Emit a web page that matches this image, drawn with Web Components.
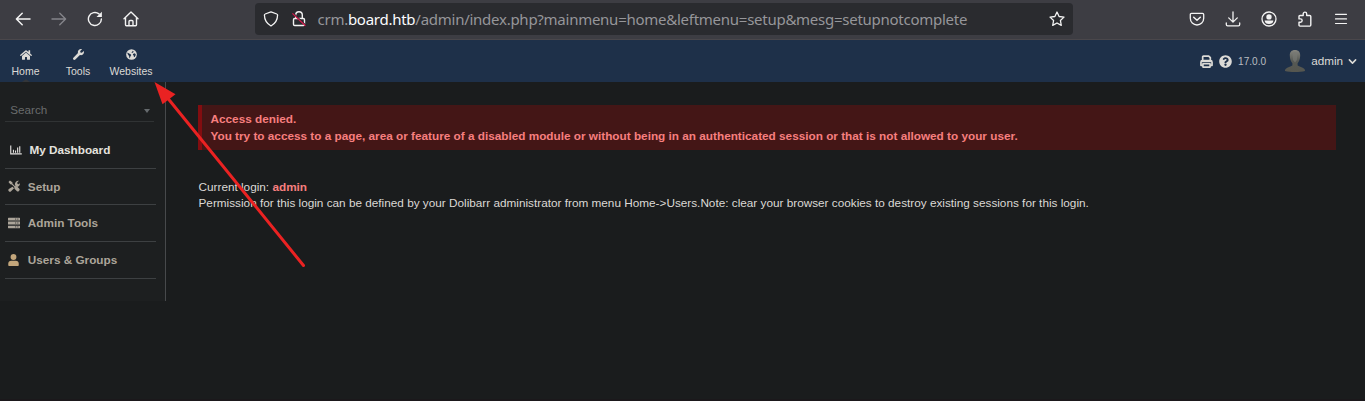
<!DOCTYPE html>
<html lang="en"><head><meta charset="utf-8"><title>Access denied</title>
<style>html,body{margin:0;height:100%;overflow:hidden;background:#1a1c1d}body{position:relative;font-family:"Liberation Sans",Arial,sans-serif;color:#dcd9d5}</style></head>
<body><app-shell></app-shell>
<script>
const ICONS={
back:['0 0 16 16','<path d="M15 8H1.5M7.2 2.2 1.4 8l5.8 5.8" fill="none" stroke="currentColor" stroke-width="1.5" stroke-linecap="round" stroke-linejoin="round"/>'],
forward:['0 0 16 16','<path d="M1 8h13.5M8.8 2.2 14.6 8l-5.8 5.8" fill="none" stroke="currentColor" stroke-width="1.4" stroke-linecap="round" stroke-linejoin="round"/>'],
reload:['0 0 16 16','<path d="M14.4 8A6.5 6.5 0 1 1 12 2.9" fill="none" stroke="currentColor" stroke-width="1.4" stroke-linecap="round"/><path d="M14.9.7v5.2H9.5z" fill="currentColor"/>'],
house:['0 0 16 16','<path d="M1 7.7 8 1.1l7 6.6M2.500 6.600v7.200c0 .5.4.9.9.9h9.200c.5 0 .9-.4.9-.9V6.600M6 14.500v-4c0-.6.4-1 1-1h2c.6 0 1 .4 1 1v4" fill="none" stroke="currentColor" stroke-width="1.4" stroke-linecap="round" stroke-linejoin="round"/>'],
shield:['0 0 16 16','<path d="M8 .9 13.8 3c.6.2.8.6.8 1.1-.1 5-2.1 8.500-6.600 10.900C3.500 12.600 1.500 9.100 1.400 4.100c0-.5.2-.9.8-1.100z" fill="none" stroke="currentColor" stroke-width="1.300" stroke-linejoin="round"/>'],
lock:['0 0 16 16','<path d="M4.700 7.500V4a3.300 3.300 0 0 1 6.600 0v3.500M3.700 7.500h8.600c.7 0 1.200.5 1.200 1.200v4.600c0 .7-.5 1.200-1.200 1.200H3.700c-.7 0-1.200-.5-1.200-1.200V8.700c0-.7.5-1.200 1.200-1.200z" fill="none" stroke="currentColor" stroke-width="1.400"/><path d="m1.800 1.700 13 12.400" stroke="#2a2b2f" stroke-width="1.200"/><path d="m1.400 2.400 13 12.400" stroke="#d8194b" stroke-width="1.200"/>'],
star:['0 0 16 16','<path d="m8 1 2.100 4.500 4.900.6-3.600 3.400.9 4.900L8 12l-4.300 2.400.9-4.900L1 6.100l4.900-.6z" fill="none" stroke="currentColor" stroke-width="1.300" stroke-linejoin="round"/>'],
pocket:['0 0 16 16','<path d="M2.500 2.300h11c.7 0 1.200.5 1.200 1.200v3.800a6.700 6.700 0 0 1-13.400 0V3.500c0-.7.5-1.200 1.200-1.200z" fill="none" stroke="currentColor" stroke-width="1.300"/><path d="M4.700 6.200 8 9.300l3.300-3.100" fill="none" stroke="currentColor" stroke-width="1.500" stroke-linecap="round" stroke-linejoin="round"/>'],
download:['0 0 16 16','<path d="M8 .9v10M3.700 6.900 8 11.100l4.300-4.200M1.300 12v1.600c0 .8.500 1.300 1.300 1.300h10.800c.8 0 1.300-.5 1.300-1.300V12" fill="none" stroke="currentColor" stroke-width="1.300" stroke-linecap="round" stroke-linejoin="round"/>'],
account:['0 0 16 16','<circle cx="8" cy="8" r="7" fill="none" stroke="currentColor" stroke-width="1.300"/><circle cx="8" cy="5.900" r="2.700" fill="currentColor"/><path d="M3.600 9.400h8.800c-.2 2.300-1.900 3.600-4.400 3.600s-4.200-1.300-4.400-3.600z" fill="currentColor"/>'],
puzzle:['0 0 16 16','<path d="M3 4.500h3.200V2.900a1.750 1.750 0 0 1 3.500 0v1.600h3.100c.6 0 1 .4 1 1v8.600c0 .6-.4 1-1 1H3c-.6 0-1-.4-1-1v-2.900h1.500a1.600 1.600 0 0 0 0-3.300H2V5.500c0-.6.4-1 1-1z" fill="none" stroke="currentColor" stroke-width="1.400" stroke-linejoin="round"/>'],
menu:['0 0 16 16','<path d="M1.500 3.300h11M1.500 7.900h11M1.500 12.500h11" stroke="currentColor" stroke-width="1.200" stroke-linecap="round"/>'],
home:['0 0 576 512','<path fill="currentColor" d="M280.370 148.260L96 300.110V464a16 16 0 0 0 16 16l112.060-.29a16 16 0 0 0 15.920-16V368a16 16 0 0 1 16-16h64a16 16 0 0 1 16 16v95.640a16 16 0 0 0 16 16.050L464 480a16 16 0 0 0 16-16V300L295.670 148.260a12.190 12.190 0 0 0-15.300 0zM571.600 251.470L488 182.560V44.050a12 12 0 0 0-12-12h-56a12 12 0 0 0-12 12v72.610L318.470 43a48 48 0 0 0-61 0L4.340 251.470a12 12 0 0 0-1.600 16.900l25.500 31A12 12 0 0 0 45.150 301l235.220-193.740a12.190 12.190 0 0 1 15.300 0L530.900 301a12 12 0 0 0 16.900-1.600l25.500-31a12 12 0 0 0-1.700-16.930z"/>'],
wrench:['0 0 512 512','<path fill="currentColor" d="M507.730 109.100c-2.240-9.030-13.540-12.090-20.120-5.510l-74.360 74.360-67.880-11.310-11.310-67.880 74.360-74.360c6.620-6.620 3.430-17.900-5.660-20.160-47.380-11.740-99.550.91-136.580 37.930-39.640 39.640-50.550 97.100-34.050 147.200L18.740 402.760c-24.990 24.990-24.990 65.510 0 90.500 24.990 24.990 65.510 24.990 90.500 0l213.210-213.210c50.120 16.710 107.470 5.680 147.370-34.220 37.070-37.070 49.700-89.320 37.910-136.730z"/>'],
globe:['0 0 16 16','<circle cx="8" cy="8" r="7.750" fill="currentColor"/><path d="M2 5c1.800.9 3.200 2.200 5.200 3 .9.500-.2 2.200-1 3.200-.4.700-.1 1.500-.6 2.300-.9-.6-.7-2.300-1.200-3.400C3.700 8.800 1.700 7.300 2 5z" fill="#1e3049"/><path d="M9.800 2.600 11.300 4l-1.500 1.300-2 .5 1-1.500zM10.300 7.200l2-.9 1.600.9.300 1.600-1.600 2.700-1.100.2-.2-2.100-1.300-1z" fill="#1e3049"/>'],
print:['0 0 16 16','<path d="M3.300 6.500V2.300c0-.6.4-1 1-1h6.400l2 2v3.200M3.500 12.700H1.200V9c0-1.200.8-2 1.900-2h9.800c1.100 0 1.900.8 1.900 2v3.700h-2.300" fill="none" stroke="currentColor" stroke-width="2.100" stroke-linejoin="round"/><path d="M3.600 10.700h8.800v4.200H3.600z" fill="none" stroke="currentColor" stroke-width="2" stroke-linejoin="round"/><path d="M2 7h12v1.900H2z" fill="currentColor"/>'],
help:['0 0 512 512','<path fill="currentColor" d="M504 256c0 136.997-111.043 248-248 248S8 392.997 8 256C8 119.083 119.043 8 256 8s248 111.083 248 248zM262.655 90c-54.497 0-89.255 22.957-116.549 63.758-3.536 5.286-2.353 12.415 2.715 16.258l34.699 26.310c5.205 3.947 12.621 3.008 16.665-2.122 17.864-22.658 30.113-35.797 57.303-35.797 20.429 0 45.698 13.148 45.698 32.958 0 14.976-12.363 22.667-32.534 33.976C247.128 238.528 216 254.941 216 296v4c0 6.627 5.373 12 12 12h56c6.627 0 12-5.373 12-12v-1.333c0-28.462 83.186-29.647 83.186-106.667 0-58.002-60.165-102-116.531-102zM256 338c-25.365 0-46 20.635-46 46 0 25.364 20.635 46 46 46s46-20.636 46-46c0-25.365-20.635-46-46-46z"/>'],
chevron:['0 0 10 10','<path d="m1.500 3.200 3.500 3.600 3.500-3.600" fill="none" stroke="currentColor" stroke-width="1.700" stroke-linejoin="round" stroke-linecap="round"/>'],
chart:['0 0 16 16','<path d="M1 2v11.200h14.700M4.600 7.500v4M7.400 8.500v3M10.200 4.500v7M13 3v8.500" fill="none" stroke="currentColor" stroke-width="1.500"/>'],
tools:['0 0 16 16','<path d="m.6 2.700 2-2 3.200 2.400.3 1.800 3.400 3.400c1-.4 1.900-.2 2.600.5l3 3c.7.7.7 1.500 0 2.200l-.9.9c-.7.7-1.500.7-2.200 0l-3-3c-.7-.7-.8-1.600-.5-2.500L5 6.100l-1.900-.3z" fill="currentColor"/><path d="M15.800 3.900c.5 1.600-.1 3.200-1.200 4.200-.8.800-1.800 1.100-2.800 1.100L9.300 6.900c-.3-1.700.1-3.300 1.100-4.400C11.500 1.200 13.100.6 14.600 1l-2.300 2.300.4 2 2 .3zM6 9l2.100 2.100-4 4c-.9.9-2.100.9-3 0s-.9-2.100 0-3z" fill="currentColor"/>'],
server:['0 0 16 16','<path d="M.8 1h14.400c.5 0 .8.300.8.700v2.800H0V1.700C0 1.300.3 1 .8 1zM0 6h16v4H0zM0 11.500h16v2.800c0 .4-.3.700-.8.700H.8c-.5 0-.8-.3-.8-.7z" fill="currentColor"/><path d="M9.500 2.800h1.400M12.400 2.800h1.400M9.500 8h1.400M12.400 8h1.400M9.500 13.200h1.400M12.400 13.200h1.400" stroke="#1d1e20" stroke-width="1.100"/>'],
user:['0 0 14 16','<circle cx="7" cy="4" r="3.900" fill="currentColor"/><path d="M4 9h6c2.500 0 4 1.600 4 4v1.500c0 .9-.6 1.500-1.500 1.500h-11C.6 16 0 15.400 0 14.500V13c0-2.400 1.500-4 4-4z" fill="currentColor"/>'],
avatar:['0 0 22 24','<defs><linearGradient id="g" x2="0" y2="1"><stop stop-color="#85857f"/><stop offset=".5" stop-color="#565954"/><stop offset="1" stop-color="#55564f"/></linearGradient></defs><path d="M11 1c3.500 0 5.300 2.200 5.200 5.500-.1 3.500-1 6-2.600 7.700v2.300c1.700 1.200 5 1.700 6.500 3.200.8.800 1 1.500.9 2.300-5 1.300-15 1.300-20 0-.1-.8.1-1.500.9-2.300 1.500-1.500 4.800-2 6.500-3.200v-2.300C6.800 12.500 5.900 10 5.800 6.500 5.700 3.200 7.500 1 11 1z" fill="url(#g)"/><path d="M8.500 4c1.500-1.300 3.500-1.300 5 0l-.6 7-1.900 2.400L9 11z" fill="#787a75" opacity=".65"/>']
};
class UiIcon extends HTMLElement{connectedCallback(){const [box,art]=ICONS[this.getAttribute('name')];
this.attachShadow({mode:'open'}).innerHTML=`<style>:host{display:block;flex:none;width:16px;height:16px}svg{display:block;width:100%;height:100%}</style><svg viewBox="${box}">${art}</svg>`}}
function define(name,html){const t=document.createElement('template');t.innerHTML=html;customElements.define(name,class extends HTMLElement{constructor(){super();this.attachShadow({mode:'open'}).append(t.content.cloneNode(true))}})}
customElements.define('ui-icon',UiIcon);
define('browser-bar',`<style>:host{display:flex;box-sizing:border-box;height:40px;background:#3d3d43;border-bottom:1px solid #4a474b;align-items:center;color:#f3f3f3;padding:0 15.500px 1px 15px}
.nav{display:flex;gap:20px;width:240px}.url{display:flex;align-items:center;box-sizing:border-box;width:818px;height:32px;background:#2a2b2f;border-radius:4px;padding:0 8px}
.url span{font:15px/22px "Noto Sans",sans-serif;letter-spacing:-.26px;color:#96969a;margin:0 0 1px 10.500px;flex:1;white-space:nowrap}.url b{font-weight:400;color:#fbfbfe}.url ui-icon+ui-icon{margin-left:12px}
.right{display:flex;gap:20.100px;margin-left:auto}</style>
<div class="nav"><ui-icon name="back"></ui-icon><ui-icon name="forward" style="color:#84848a"></ui-icon><ui-icon name="reload"></ui-icon><ui-icon name="house" style="margin-left:-.4px"></ui-icon></div>
<div class="url"><ui-icon name="shield"></ui-icon><ui-icon name="lock"></ui-icon><span>crm.<b>board.htb</b>/admin/index.php?mainmenu=home&amp;leftmenu=setup&amp;mesg=setupnotcomplete</span><ui-icon name="star"></ui-icon></div>
<div class="right"><ui-icon name="pocket"></ui-icon><ui-icon name="download"></ui-icon><ui-icon name="account"></ui-icon><ui-icon name="puzzle"></ui-icon><ui-icon name="menu"></ui-icon></div>`);
define('top-tab',`<style>:host{display:flex;box-sizing:border-box;flex-direction:column;align-items:center;font-size:10.500px;line-height:12px;padding-top:8.600px;gap:4.400px;position:relative}:host([active])::after{content:"";position:absolute;bottom:0;left:22px;border:4px solid transparent;border-top:0;border-bottom:3px solid #33363a}slot[name=icon]{display:block;height:12px}</style><slot name="icon"></slot><slot></slot>`);
define('top-bar',`<style>:host{display:flex;height:42px;background:#1e3049;color:#dcdad6}.tabs{display:flex}top-tab ui-icon{width:12px;height:12px}
.user{display:flex;margin-left:auto;align-items:center;padding-right:8px;font-size:11.700px}.user>*{flex:none}</style>
<div class="tabs"><top-tab active style="width:51px"><ui-icon slot="icon" name="home"></ui-icon>Home</top-tab><top-tab style="width:54px"><ui-icon slot="icon" name="wrench" style="width:11px;height:11px"></ui-icon>Tools</top-tab><top-tab style="width:52px"><ui-icon slot="icon" name="globe" style="width:11px;height:11px"></ui-icon>Websites</top-tab></div>
<div class="user"><ui-icon name="print" style="width:13px;height:13px"></ui-icon><ui-icon name="help" style="width:13px;height:13px;margin-left:6px"></ui-icon><span style="font-size:10.100px;margin-left:6px;color:#b9bcc0">17.0.0</span><ui-icon name="avatar" style="width:22px;height:24px;margin-left:18px"></ui-icon><span style="margin:0 0 2px 5px">admin</span><ui-icon name="chevron" style="width:9px;height:9px;margin:1px 0 0 5px"></ui-icon></div>`);
define('menu-row',`<style>:host{display:flex;box-sizing:border-box;align-items:center;height:36.700px;border-bottom:1px solid #3d4042;padding:0 0 .5px 3px;font-size:11.750px;font-weight:700;color:#aca59a}slot[name=icon]{display:block;flex:none;width:19.800px}</style><slot name="icon"></slot><slot></slot>`);
define('side-menu',`<style>:host{display:block;box-sizing:border-box;width:166px;height:219px;background:#1d1f20;border-right:1px solid #47494b;padding:18px 9px 0 5px}
.search{display:flex;box-sizing:border-box;height:22px;border-bottom:1px solid #303334;align-items:center;justify-content:space-between;margin-right:2px;padding:0 4px 2px 5.300px;font-size:11.700px;color:#696b6c}.search i{border:3px solid transparent;border-top:4px solid #656a6d;border-bottom:0;margin-top:3px}
nav{padding-top:10px}menu-row ui-icon{width:12px;height:12px}</style>
<div class="search"><span>Search</span><i></i></div><nav>
<menu-row style="color:#e4e2df;padding-left:4.600px"><ui-icon slot="icon" name="chart"></ui-icon>My Dashboard</menu-row>
<menu-row><ui-icon slot="icon" name="tools"></ui-icon>Setup</menu-row><menu-row><ui-icon slot="icon" name="server"></ui-icon>Admin Tools</menu-row><menu-row><ui-icon slot="icon" name="user" style="width:11px;color:#c3a67b"></ui-icon>Users &amp; Groups</menu-row></nav>`);
define('error-box',`<style>:host{display:block;box-sizing:border-box;height:45px;border-left:4px solid #820d10;background:#441616;padding:5px 8.500px;font-size:11.780px;line-height:17px;font-weight:700;color:#f77f7f;white-space:nowrap}</style><slot></slot>`);
define('main-panel',`<style>:host{display:block;flex:1;padding:23px 29px 0 32px;font-size:11.780px;line-height:16px}p{margin:29px 0 0 .5px;white-space:nowrap}b{color:#f77f7f}</style>
<error-box>Access denied.<br>You try to access to a page, area or feature of a disabled module or without being in an authenticated session or that is not allowed to your user.</error-box>
<p>Current login: <b>admin</b><br>Permission for this login can be defined by your Dolibarr administrator from menu Home-&gt;Users.Note: clear your browser cookies to destroy existing sessions for this login.</p>`);
define('pointer-arrow',`<style>:host{position:absolute;left:150px;top:78px;pointer-events:none}svg{display:block}</style><svg width="160" height="192"><path d="M153.500 187.500 18 20.500" stroke="#ea2222" stroke-width="3" stroke-linecap="round"/><path d="m4.500 4 21 12.300-13 10z" fill="#ea2222"/></svg>`);
define('app-shell',`<style>:host{display:flex;flex-direction:column;height:401px}.body{display:flex;align-items:flex-start;flex:1;border-bottom:2px solid #1b181b}</style><browser-bar></browser-bar><top-bar></top-bar><div class="body"><side-menu></side-menu><main-panel></main-panel></div><pointer-arrow></pointer-arrow>`);
</script></body></html>
